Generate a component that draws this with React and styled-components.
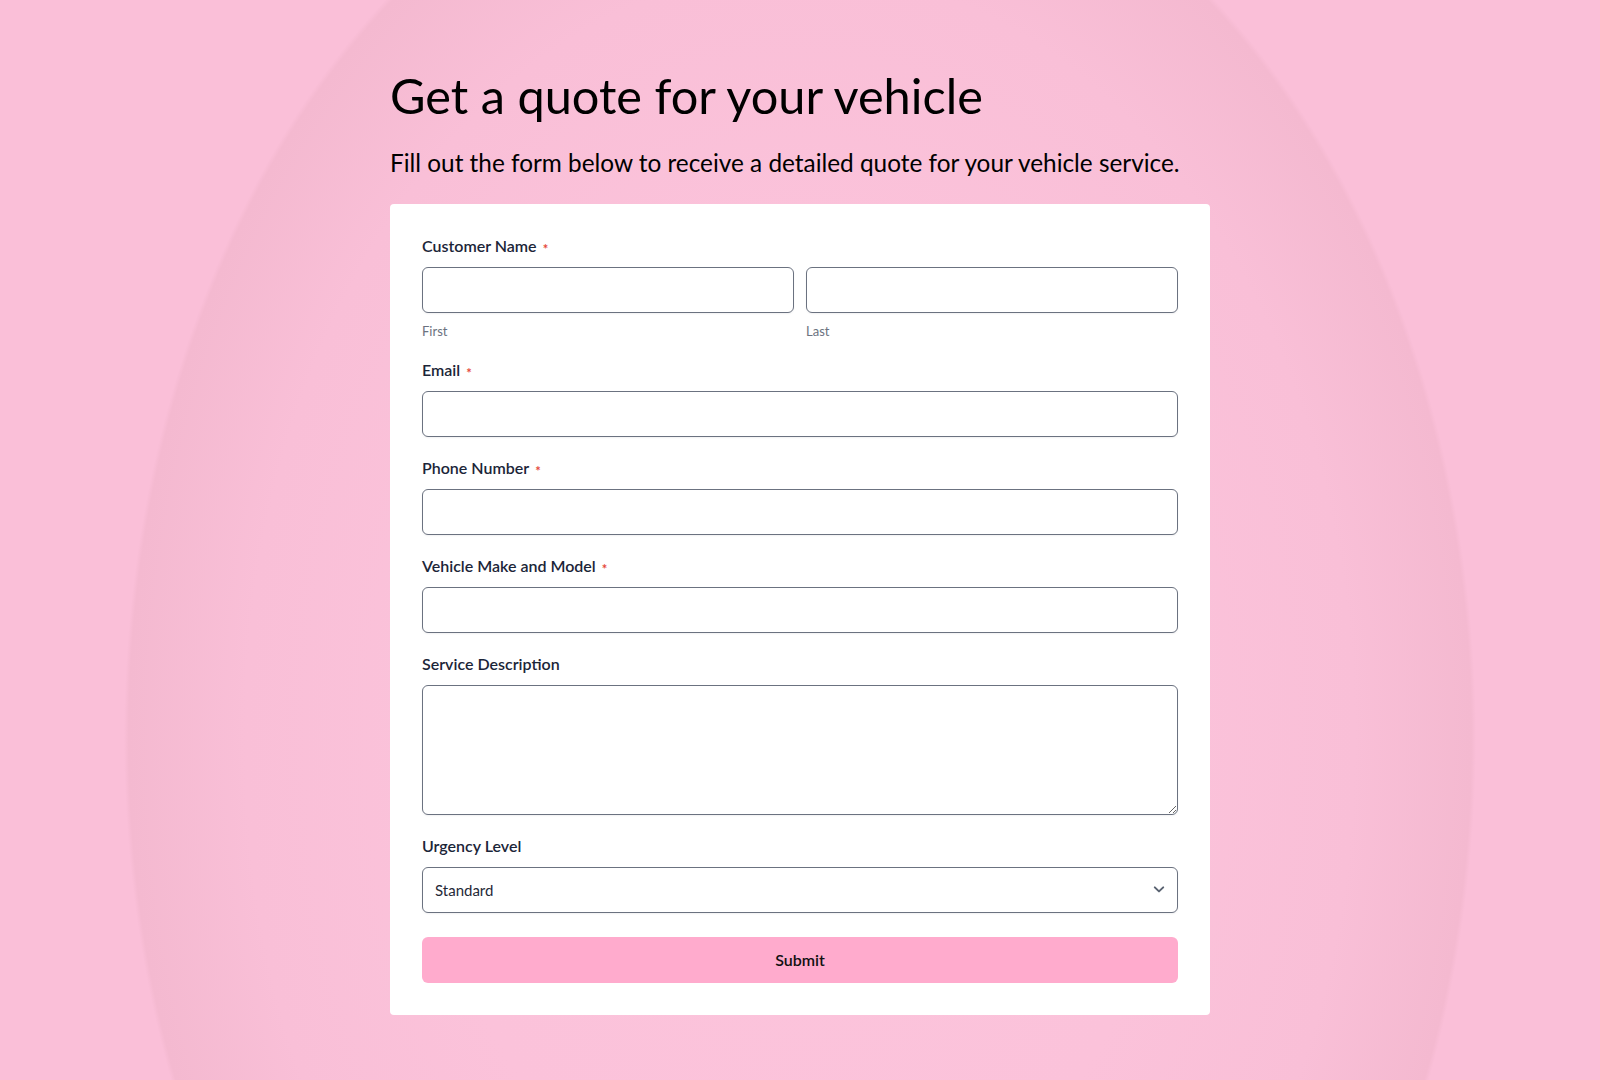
import React from 'react';
import styled, { createGlobalStyle } from 'styled-components';

const GlobalStyle = createGlobalStyle`
    * {
        box-sizing: border-box;
    }
    body {
        margin: 0;
        font-family: Lato, "Noto Sans", sans-serif;
        background: #fabfd8;
    }
`;

const Page = styled.main`
    min-height: 100vh;
    padding: 66px 0 60px;
    background:
        radial-gradient(ellipse 676px 935px at 800px 738px,
            #fcc4dc 0%,
            #fbc2da 55%,
            #f9bfd7 82%,
            #f4b9d0 99.3%,
            rgba(250, 191, 216, 0) 100%),
        #fabfd8;
`;

const Wrapper = styled.div`
    width: 820px;
    margin: 0 auto;
`;

const Title = styled.h1`
    margin: 0;
    font-family: Lato, sans-serif;
    font-weight: 400;
    font-size: 48.7px;
    line-height: 1.2;
    color: #000;
`;

const Subtitle = styled.p`
    margin: 24px 0 26px;
    font-family: Lato, sans-serif;
    font-size: 24.35px;
    line-height: 1.2;
    color: #000;
`;

const Card = styled.form`
    background: #ffffff;
    border-radius: 4px;
    padding: 32px 32px 32px;
`;

const Field = styled.div`
    margin-bottom: 21px;
`;

const Label = styled.label`
    display: flex;
    align-items: center;
    gap: 6px;
    height: 20px;
    margin-bottom: 11px;
    font-size: 16px;
    font-weight: 600;
    color: #1b2538;
`;

const Required = styled.span`
    padding-top: 6px;
    color: #e5483a;
    font-size: 13px;
    font-weight: 700;
`;

const NameRow = styled.div`
    display: grid;
    grid-template-columns: 1fr 1fr;
    gap: 12px;
`;

const Sub = styled.span`
    display: block;
    margin-top: 10px;
    font-size: 13px;
    line-height: 16px;
    color: #6b7280;
`;

const Input = styled.input`
    display: block;
    width: 100%;
    height: 46px;
    padding: 0 12px;
    border: 1px solid #6b7280;
    border-radius: 6px;
    background: #fff;
    box-shadow: 0 1px 2px rgba(15, 23, 42, 0.06);
    font-family: Lato, sans-serif;
    font-size: 15px;
    color: #1f2937;
    outline: none;
`;

const TextArea = styled.textarea`
    display: block;
    width: 100%;
    height: 130px;
    padding: 10px 12px;
    border: 1px solid #6b7280;
    border-radius: 6px;
    background: #fff;
    box-shadow: 0 1px 2px rgba(15, 23, 42, 0.06);
    font-family: Lato, sans-serif;
    font-size: 15px;
    resize: vertical;
    outline: none;
`;

const SelectBox = styled.div`
    position: relative;
`;

const Select = styled.select`
    display: block;
    width: 100%;
    height: 46px;
    padding: 0 12px;
    border: 1px solid #6b7280;
    border-radius: 6px;
    background: #fff;
    box-shadow: 0 1px 2px rgba(15, 23, 42, 0.06);
    appearance: none;
    font-family: Lato, sans-serif;
    font-size: 15px;
    color: #1f2937;
    outline: none;
`;

const Chevron = styled.svg`
    position: absolute;
    right: 13px;
    top: 50%;
    transform: translateY(-55%);
    pointer-events: none;
`;

const Submit = styled.button`
    display: block;
    width: 100%;
    height: 46px;
    margin-top: 24px;
    border: none;
    border-radius: 6px;
    background: #ffabcd;
    font-family: Lato, sans-serif;
    font-weight: 600;
    font-size: 16px;
    color: #111;
    cursor: pointer;
`;

const TextField = ({ label, required }) => (
    <Field>
        <Label>
            {label}
            {required && <Required>*</Required>}
        </Label>
        <Input type="text" />
    </Field>
);

export default function App() {
    return (
        <Page>
            <GlobalStyle />
            <Wrapper>
                <Title>Get a quote for your vehicle</Title>
                <Subtitle>Fill out the form below to receive a detailed quote for your vehicle service.</Subtitle>
                <Card onSubmit={e => e.preventDefault()}>
                    <Field>
                        <Label>
                            Customer Name
                            <Required>*</Required>
                        </Label>
                        <NameRow>
                            <div>
                                <Input type="text" />
                                <Sub>First</Sub>
                            </div>
                            <div>
                                <Input type="text" />
                                <Sub>Last</Sub>
                            </div>
                        </NameRow>
                    </Field>
                    <TextField label="Email" required />
                    <TextField label="Phone Number" required />
                    <TextField label="Vehicle Make and Model" required />
                    <Field>
                        <Label>Service Description</Label>
                        <TextArea />
                    </Field>
                    <Field>
                        <Label>Urgency Level</Label>
                        <SelectBox>
                            <Select defaultValue="standard">
                                <option value="standard">Standard</option>
                                <option value="urgent">Urgent</option>
                                <option value="emergency">Emergency</option>
                            </Select>
                            <Chevron width="12" height="8" viewBox="0 0 12 8" fill="none">
                                <path d="M1.8 1.8 6 5.8l4.2-4" stroke="#5b6472" strokeWidth="2" strokeLinecap="round" strokeLinejoin="round" />
                            </Chevron>
                        </SelectBox>
                    </Field>
                    <Submit type="submit">Submit</Submit>
                </Card>
            </Wrapper>
        </Page>
    );
}
